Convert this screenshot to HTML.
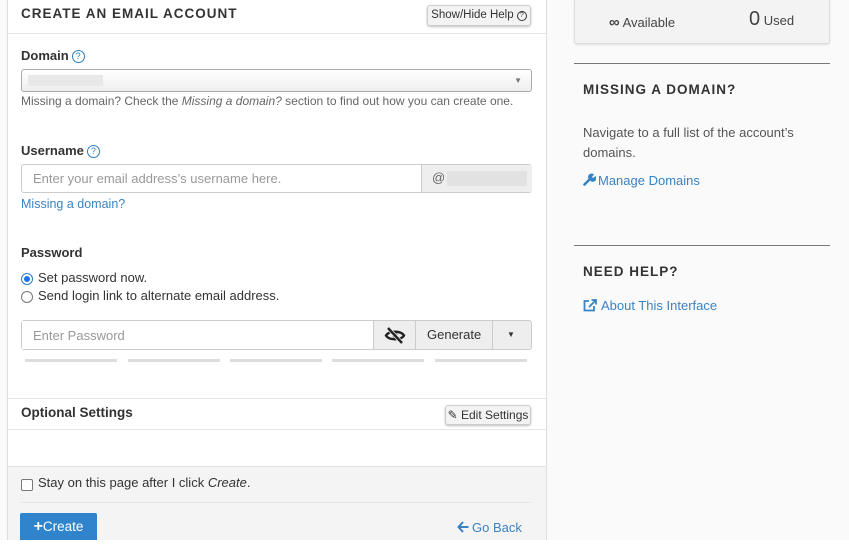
<!DOCTYPE html>
<html><head><style>
*{box-sizing:border-box;margin:0;padding:0}
body{width:849px;height:553px;background:#fff;font-family:"Liberation Sans",sans-serif;color:#333;position:relative;overflow:hidden;font-size:13px}
.a{position:absolute}
.panel{left:7px;top:0;width:540px;height:540px;background:#fff;border-left:1px solid #ddd;border-right:1px solid #ddd}
.lbl{font-weight:bold;font-size:13px;color:#333}
.q{display:inline-block;width:13px;height:13px;border:1.3px solid #2f7ec1;border-radius:50%;color:#2f7ec1;font-size:9px;text-align:center;line-height:11px;vertical-align:1px;margin-left:3px;font-weight:normal}
.inp{border:1px solid #ccc;border-radius:3px;background:#fff}
.ph{color:#999;font-size:13px}
.link{color:#3a83c3}
.btn{border:1px solid #ccc;border-radius:3px;background:#f3f3f3;box-shadow:0 1px 2px rgba(0,0,0,.25);font-size:12px;color:#333}
.bar{height:3px;background:#ddd;top:359px;width:92px}
.hd{font-weight:bold;letter-spacing:1px;font-size:13.5px;color:#333}
</style></head><body>
<div class="a" style="left:0;top:0;width:849px;height:540px;background:#fafafa"></div>
<div class="a panel"></div>
<div class="a hd" style="left:21px;top:6px">CREATE AN EMAIL ACCOUNT</div>
<div class="a btn" style="left:427px;top:5px;width:104px;height:21px;line-height:19px;text-align:center;font-size:11.5px">Show/Hide Help <span style="display:inline-block;width:10px;height:10px;border:1px solid #333;border-radius:50%;font-size:7px;line-height:8px;vertical-align:1px">?</span></div>
<div class="a" style="left:8px;top:33px;width:538px;height:1px;background:#e5e5e5"></div>
<div class="a lbl" style="left:21px;top:48px">Domain<span class="q">?</span></div>
<div class="a inp" style="left:21px;top:69px;width:511px;height:23px;border-color:#aaa;background:linear-gradient(#fff,#eee)"><div class="a" style="left:6px;top:5px;width:75px;height:11px;background:#e8e8e8"></div><div class="a" style="right:9px;top:6px;font-size:8px;color:#777">▼</div></div>
<div class="a" style="left:21px;top:94px;font-size:12px;color:#666">Missing a domain? Check the <i>Missing a domain?</i> section to find out how you can create one.</div>
<div class="a lbl" style="left:21px;top:143px">Username<span class="q">?</span></div>
<div class="a inp" style="left:21px;top:164px;width:511px;height:29px"><span class="a ph" style="left:11px;top:6px">Enter your email address’s username here.</span><div class="a" style="left:399px;top:0;width:111px;height:27px;background:#eee;border-left:1px solid #ccc"><span class="a" style="left:10px;top:5px;color:#666">@</span><div class="a" style="left:25px;top:6px;width:80px;height:15px;background:#e2e2e2"></div></div></div>
<div class="a link" style="left:21px;top:197px;font-size:12.5px">Missing a domain?</div>
<div class="a lbl" style="left:21px;top:245px">Password</div>
<div class="a" style="left:21px;top:273px;width:12px;height:12px;border-radius:50%;border:1px solid #2f7ec1;background:#fff"><div class="a" style="left:2px;top:2px;width:6px;height:6px;border-radius:50%;background:#1a73e8"></div></div>
<div class="a" style="left:38px;top:270px">Set password now.</div>
<div class="a" style="left:21px;top:291px;width:12px;height:12px;border-radius:50%;border:1px solid #777;background:#fff"></div>
<div class="a" style="left:38px;top:288px">Send login link to alternate email address.</div>
<div class="a inp" style="left:21px;top:320px;width:511px;height:30px;background:#eee"><div class="a" style="left:0;top:0;width:352px;height:28px;background:#fff;border-right:1px solid #ccc"><span class="a ph" style="left:11px;top:7px">Enter Password</span></div>
<svg class="a" style="left:362px;top:6px" width="22" height="17" viewBox="0 0 22 17"><path d="M2 8.5C5 3.5 17 3.5 20 8.5C17 13.5 5 13.5 2 8.5Z" fill="none" stroke="#222" stroke-width="2.4"/><circle cx="11" cy="8.5" r="2.5" fill="#222"/><path d="M4 1L18 16" stroke="#eee" stroke-width="4"/><path d="M4 1L18 16" stroke="#222" stroke-width="2.4"/></svg>
<div class="a" style="left:393px;top:0;width:1px;height:28px;background:#ccc"></div>
<span class="a" style="left:405px;top:6px">Generate</span>
<div class="a" style="left:470px;top:0;width:1px;height:28px;background:#ccc"></div>
<div class="a" style="left:485px;top:9px;font-size:8px">▼</div></div>
<div class="a bar" style="left:25px"></div><div class="a bar" style="left:128px"></div><div class="a bar" style="left:230px"></div><div class="a bar" style="left:332px"></div><div class="a bar" style="left:435px"></div>
<div class="a" style="left:8px;top:398px;width:538px;height:1px;background:#e5e5e5"></div>
<div class="a lbl" style="left:21px;top:405px;font-size:13.5px">Optional Settings</div>
<div class="a btn" style="left:445px;top:405px;width:86px;height:20px;line-height:18px;text-align:center">✎ Edit Settings</div>
<div class="a" style="left:8px;top:429px;width:538px;height:1px;background:#e5e5e5"></div>
<div class="a" style="left:8px;top:466px;width:538px;height:74px;background:#f4f4f4;border-top:1px solid #e3e3e3"></div>
<div class="a" style="left:21px;top:479px;width:12px;height:12px;border:1px solid #777;border-radius:2px;background:#fff"></div>
<div class="a" style="left:38px;top:475px">Stay on this page after I click <i>Create</i>.</div>
<div class="a" style="left:21px;top:502px;width:510px;height:1px;background:#e6e6e6"></div>
<div class="a" style="left:20px;top:513px;width:77px;height:27px;background:#2f84cc;color:#fff;border-radius:2px 2px 0 0;font-size:13.5px;line-height:28px;text-align:center"><b style="font-size:16px">+</b>Create</div>
<svg class="a" style="left:457px;top:521px" width="12" height="12" viewBox="0 0 12 12"><path d="M6 1L1.5 6L6 11M1.5 6H11.5" fill="none" stroke="#3a83c3" stroke-width="2"/></svg>
<div class="a link" style="left:472px;top:520px;font-size:13px">Go Back</div>
<div class="a" style="left:574px;top:0;width:256px;height:44px;background:#f3f3f3;border:1px solid #ddd;border-top:0;border-radius:0 0 3px 3px;box-shadow:0 1px 2px rgba(0,0,0,.1)"><span class="a" style="left:34px;top:14px;font-size:13px;color:#444"><b style="font-size:15px">∞</b> Available</span><span class="a" style="left:174px;top:8px;font-size:20px;color:#444">0<span style="font-size:13px"> Used</span></span></div>
<div class="a" style="left:574px;top:63px;width:256px;height:1px;background:#777"></div>
<div class="a hd" style="left:583px;top:82px">MISSING A DOMAIN?</div>
<div class="a" style="left:583px;top:123px;color:#555;line-height:20px;width:240px">Navigate to a full list of the account’s domains.</div>
<svg class="a" style="left:583px;top:173px" width="13" height="13" viewBox="0 0 13 13"><path d="M1.5 11.5L7 6" stroke="#3a83c3" stroke-width="2.6" stroke-linecap="round"/><path d="M6 6.5A3.5 3.5 0 0 1 11 1.5L9 4L10 5L12.5 3A3.5 3.5 0 0 1 7 7.5Z" fill="#3a83c3"/></svg>
<div class="a link" style="left:598px;top:173px">Manage Domains</div>
<div class="a" style="left:574px;top:245px;width:256px;height:1px;background:#777"></div>
<div class="a hd" style="left:583px;top:264px">NEED HELP?</div>
<svg class="a" style="left:583px;top:299px" width="14" height="13" viewBox="0 0 14 13"><path d="M6 2H1.5V11.5H11V7" fill="none" stroke="#3a83c3" stroke-width="1.8"/><path d="M6 8L12.5 1.5M8.5 1H13V5.5" fill="none" stroke="#3a83c3" stroke-width="1.8"/></svg>
<div class="a link" style="left:601px;top:298px">About This Interface</div>
</body></html>
